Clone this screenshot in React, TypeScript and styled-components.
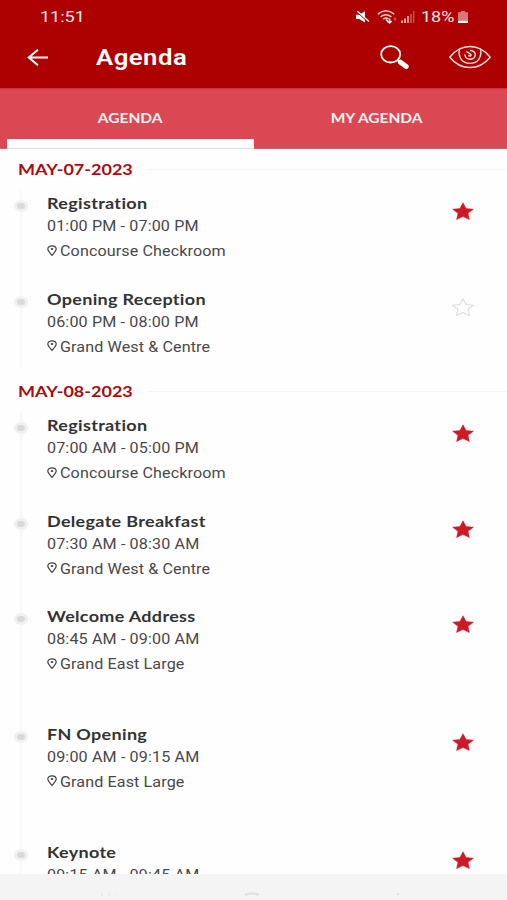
import React from "react";
import styled, { createGlobalStyle } from "styled-components";

const GlobalStyle = createGlobalStyle`
  * { box-sizing: border-box; }
  html, body { margin: 0; padding: 0; background: #fff; }
  svg { display: block; overflow: visible; }
`;

const Screen = styled.div`
  width: 507px;
  height: 900px;
  overflow: hidden;
  display: flex;
  flex-direction: column;
  background: #fefefe;
  font-family: Roboto, sans-serif;
`;

const Wide = styled.span<{ $x: number; $origin?: string }>`
  display: block;
  white-space: nowrap;
  transform: scaleX(${(p) => p.$x});
  transform-origin: ${(p) => p.$origin ?? "left"} center;
`;

const Header = styled.header`
  flex: none;
  height: 88px;
  background: #ad0001;
  color: #fff;
`;

const StatusBar = styled.div`
  height: 32px;
  padding: 1px 38px 0 40px;
  display: flex;
  align-items: center;
  justify-content: space-between;
  font-size: 15px;
  line-height: 30px;
  color: #ffe6e6;
`;

const StatusIcons = styled.div`
  display: flex;
  align-items: center;
  width: 113px;
`;

const IconSlot = styled.div<{ $gap: number }>`
  flex: none;
  margin-right: ${(p) => p.$gap}px;
`;

const BatteryText = styled.div`
  width: 37px;
`;

const TitleBar = styled.div`
  height: 50px;
  padding: 0 16px 0 27px;
  display: flex;
  align-items: center;
`;

const Title = styled.h1`
  flex: 1;
  margin: 2px 0 0 48px;
  font-size: 22px;
  line-height: 50px;
  font-weight: 600;
  letter-spacing: 0.4px;
`;

const Tabs = styled.nav`
  flex: none;
  height: 61px;
  display: grid;
  grid-template-columns: 254px 253px;
  background: #da4953;
  border-top: 1px solid #d0303a;
  border-bottom: 1px solid #cf6269;
`;

const Tab = styled.div<{ $active?: boolean }>`
  display: flex;
  align-items: center;
  justify-content: center;
  padding: ${(p) => (p.$active ? "0 0 1px 7px" : "0 7px 1px 0")};
  color: #fff3f3;
  font: 700 13px/20px Lato, sans-serif;
  position: relative;
  &::after {
    content: "";
    display: ${(p) => (p.$active ? "block" : "none")};
    position: absolute;
    left: 7px;
    right: 0;
    bottom: -1px;
    height: 9px;
    background: #fff;
    border-bottom: 1px solid #deded9;
  }
`;

const Content = styled.main`
  flex: 1;
  min-height: 0;
  overflow: hidden;
`;

const Group = styled.section<{ $height?: number }>`
  height: ${(p) => (p.$height ? `${p.$height}px` : "auto")};
`;

const DateRow = styled.div`
  height: 41px;
  display: grid;
  grid-template-columns: 129px 1fr;
  padding-left: 18px;
  align-items: center;
`;

const DateText = styled.h2`
  margin: 0;
  color: #a90c12;
  font: 700 15px/41px Lato, sans-serif;
`;

const Rule = styled.div`
  height: 1px;
  margin-top: -1px;
  background: #f5f5f5;
`;

const Entry = styled.article<{ $height: number }>`
  height: ${(p) => p.$height}px;
  display: grid;
  grid-template-columns: 47px 1fr 56px;
`;

const Rail = styled.div`
  width: 2px;
  margin-left: 20px;
  background: #f8f8f8;
  display: flex;
  justify-content: center;
`;

const Dot = styled.div`
  flex: none;
  width: 14px;
  height: 12px;
  margin: 10px 1px 0 0;
  border-radius: 50%;
  background: #d9d9d9;
  border: 3px solid #f0f0f0;
`;

const Details = styled.div`
  min-width: 0;
  color: #484848;
`;

const EntryTitle = styled.h3`
  margin: 3px 0 0;
  color: #333;
  font: 700 15px/20px Lato, sans-serif;
  letter-spacing: 0.26px;
`;

const Time = styled.div`
  font-size: 14px;
  line-height: 20px;
  margin-top: 3px;
  letter-spacing: 0.12px;
`;

const Place = styled.div`
  display: flex;
  align-items: center;
  gap: 3px;
  margin-top: 5px;
  font-size: 14px;
  line-height: 20px;
  height: 20px;
  letter-spacing: 0.1px;
`;

const StarSlot = styled.div`
  padding-top: 12px;
`;

const NavBar = styled.footer`
  flex: none;
  height: 26px;
  background: #f4f4f4;
  display: flex;
  align-items: flex-end;
`;

const Star = ({ filled }: { filled: boolean }) => (
  <svg width="24" height="19" viewBox="0 0 24 19">
    <path
      d="M12 .7 15.1 6.5 22.4 7.2 17 11.3 18.4 17.5 12 14.5 5.6 17.5 7 11.3 1.6 7.2 8.9 6.5Z"
      fill={filled ? "#ce1a27" : "#fff"}
      stroke={filled ? "#ce1a27" : "#dcdcdc"}
      strokeWidth={filled ? 0.5 : 1.1}
      strokeLinejoin="round"
    />
  </svg>
);

const Pin = () => (
  <svg width="10" height="13" viewBox="0 0 10 13" fill="none">
    <path d="M5 10.4C3.2 8.2 .8 6.2 .8 4.1.8 2.1 2.6.8 5 .8s4.2 1.3 4.2 3.3C9.2 6.2 6.8 8.2 5 10.4Z" stroke="#444" strokeWidth="1.2" />
    <ellipse cx="5" cy="4.1" rx="1.3" ry="1" fill="#444" />
  </svg>
);

const Muted = () => (
  <svg width="14" height="12" viewBox="0 0 14 12">
    <path d="M0 3.8h3.2L9 .3v11.2L3.2 8H0Z" fill="#fff" />
    <path d="M1 1 13 11.5" stroke="#ad0001" strokeWidth="1.2" />
    <path d="M1.4 .3 13 10.6" stroke="#fff" strokeWidth="1.4" />
  </svg>
);

const Wifi = () => (
  <svg width="20" height="14" viewBox="0 0 20 14" fill="none" stroke="#f8caca" strokeWidth="1.5">
    <path d="M.8 4.1Q9 -2.7 17.2 4.1M3.6 6.8Q9 2.5 14.4 6.8M6.3 9.2Q9 7 11.7 9.2" />
    <path d="M9 9.5 11.5 12.5M12.8 8.5V12.5M11 11l1.8 2 1.8-2" stroke="#fff" strokeWidth="1.2" />
    <path d="M18 7v4M16.5 9h3" strokeWidth=".8" opacity=".5" />
  </svg>
);

const Signal = () => (
  <svg width="14" height="12" viewBox="0 0 14 12">
    <path d="M0 9.5h2V12H0ZM3 7.5h2V12H3Z" fill="#f0b0b0" />
    <path d="M6 5h2v7H6Z" fill="#e08a8a" />
    <path d="M9 3h1.8v9H9ZM12 0h1.4v12H12Z" fill="#c85050" />
  </svg>
);

const Battery = () => (
  <svg width="10" height="12" viewBox="0 0 10 12">
    <path d="M3 0h4v1.2h3V12H0V1.2h3Z" fill="#d87979" />
    <path d="M0 9.8h10V12H0Z" fill="#fff" />
  </svg>
);

const BackArrow = () => (
  <svg width="21" height="17" viewBox="0 0 21 17" fill="none" stroke="#fff" strokeWidth="2">
    <path d="M21 8.5H1.7M11 .8 1.7 8.5 11 16.2" />
  </svg>
);

const Search = () => (
  <svg width="29" height="25" viewBox="0 0 29 25" fill="none" stroke="#fff">
    <ellipse cx="10.7" cy="9.3" rx="9.5" ry="8.2" strokeWidth="1.8" />
    <path d="M17.5 15.2 20 17.2" strokeWidth="2.2" />
    <path d="M20.5 17.2 26.2 21.5" strokeWidth="5" strokeLinecap="round" />
  </svg>
);

const Eye = () => (
  <svg width="42" height="24" viewBox="0 0 42 24" fill="none" stroke="#ffe0dd" strokeWidth="1.4">
    <path d="M.8 12.2C6.5 4.8 13 1.5 21 1.5s14.5 3.3 20.2 10.7C35.5 19.2 29 22.5 21 22.5S6.5 19.2.8 12.2Z" />
    <path d="M10.5 3.6C8.7 12.5 13.5 18.4 21 18.4S33.3 12.5 31.5 3.6" />
    <path d="M21 5.5C25 5.5 26.7 8 26.2 10.3 25.7 13 23.5 14.2 21 14.2S16 12.5 15.8 9.5" />
    <path d="M17.5 6.5 21.5 9.2C23 10.5 20.8 11.8 19.3 10.3" strokeWidth="1.5" />
  </svg>
);

type Item = { title: string; time: string; place: string; starred: boolean; height: number };

const days: { date: string; height?: number; items: Item[] }[] = [
  {
    date: "MAY-07-2023",
    height: 222,
    items: [
      { title: "Registration", time: "01:00 PM - 07:00 PM", place: "Concourse Checkroom", starred: true, height: 95.5 },
      { title: "Opening Reception", time: "06:00 PM - 08:00 PM", place: "Grand West & Centre", starred: false, height: 81.5 },
    ],
  },
  {
    date: "MAY-08-2023",
    items: [
      { title: "Registration", time: "07:00 AM - 05:00 PM", place: "Concourse Checkroom", starred: true, height: 95.5 },
      { title: "Delegate Breakfast", time: "07:30 AM - 08:30 AM", place: "Grand West & Centre", starred: true, height: 95.5 },
      { title: "Welcome Address", time: "08:45 AM - 09:00 AM", place: "Grand East Large", starred: true, height: 117.5 },
      { title: "FN Opening", time: "09:00 AM - 09:15 AM", place: "Grand East Large", starred: true, height: 118.5 },
      { title: "Keynote", time: "09:15 AM - 09:45 AM", place: "Grand East Large", starred: true, height: 118 },
    ],
  },
];

export default function App() {
  return (
    <Screen>
      <GlobalStyle />
      <Header>
        <StatusBar>
          <Wide $x={1.2}>11:51</Wide>
          <StatusIcons>
            <IconSlot $gap={7}><Muted /></IconSlot>
            <IconSlot $gap={4}><Wifi /></IconSlot>
            <IconSlot $gap={6}><Signal /></IconSlot>
            <BatteryText><Wide $x={1.2}>18%</Wide></BatteryText>
            <Battery />
          </StatusIcons>
        </StatusBar>
        <TitleBar>
          <BackArrow />
          <Title><Wide $x={1.17}>Agenda</Wide></Title>
          <IconSlot $gap={40}><Search /></IconSlot>
          <Eye />
        </TitleBar>
      </Header>
      <Tabs>
        <Tab $active><Wide $x={1.19} $origin="center">AGENDA</Wide></Tab>
        <Tab><Wide $x={1.19} $origin="center">MY AGENDA</Wide></Tab>
      </Tabs>
      <Content>
        {days.map((day) => (
          <Group key={day.date} $height={day.height}>
            <DateRow>
              <DateText><Wide $x={1.2}>{day.date}</Wide></DateText>
              <Rule />
            </DateRow>
            {day.items.map((item) => (
              <Entry key={item.time} $height={item.height}>
                <Rail><Dot /></Rail>
                <Details>
                  <EntryTitle><Wide $x={1.2}>{item.title}</Wide></EntryTitle>
                  <Time><Wide $x={1.15}>{item.time}</Wide></Time>
                  <Place><Pin /><Wide $x={1.15}>{item.place}</Wide></Place>
                </Details>
                <StarSlot><Star filled={item.starred} /></StarSlot>
              </Entry>
            ))}
          </Group>
        ))}
      </Content>
      <NavBar>
        <svg width="507" height="8" viewBox="0 0 507 8" fill="none" stroke="#dfdfdf">
          <path d="M102 1v3M109 1v3M117 3v1" />
          <path d="M245 3Q252 0 259 3" strokeWidth="2" />
          <path d="M397 3l1-2 1 2" />
        </svg>
      </NavBar>
    </Screen>
  );
}
